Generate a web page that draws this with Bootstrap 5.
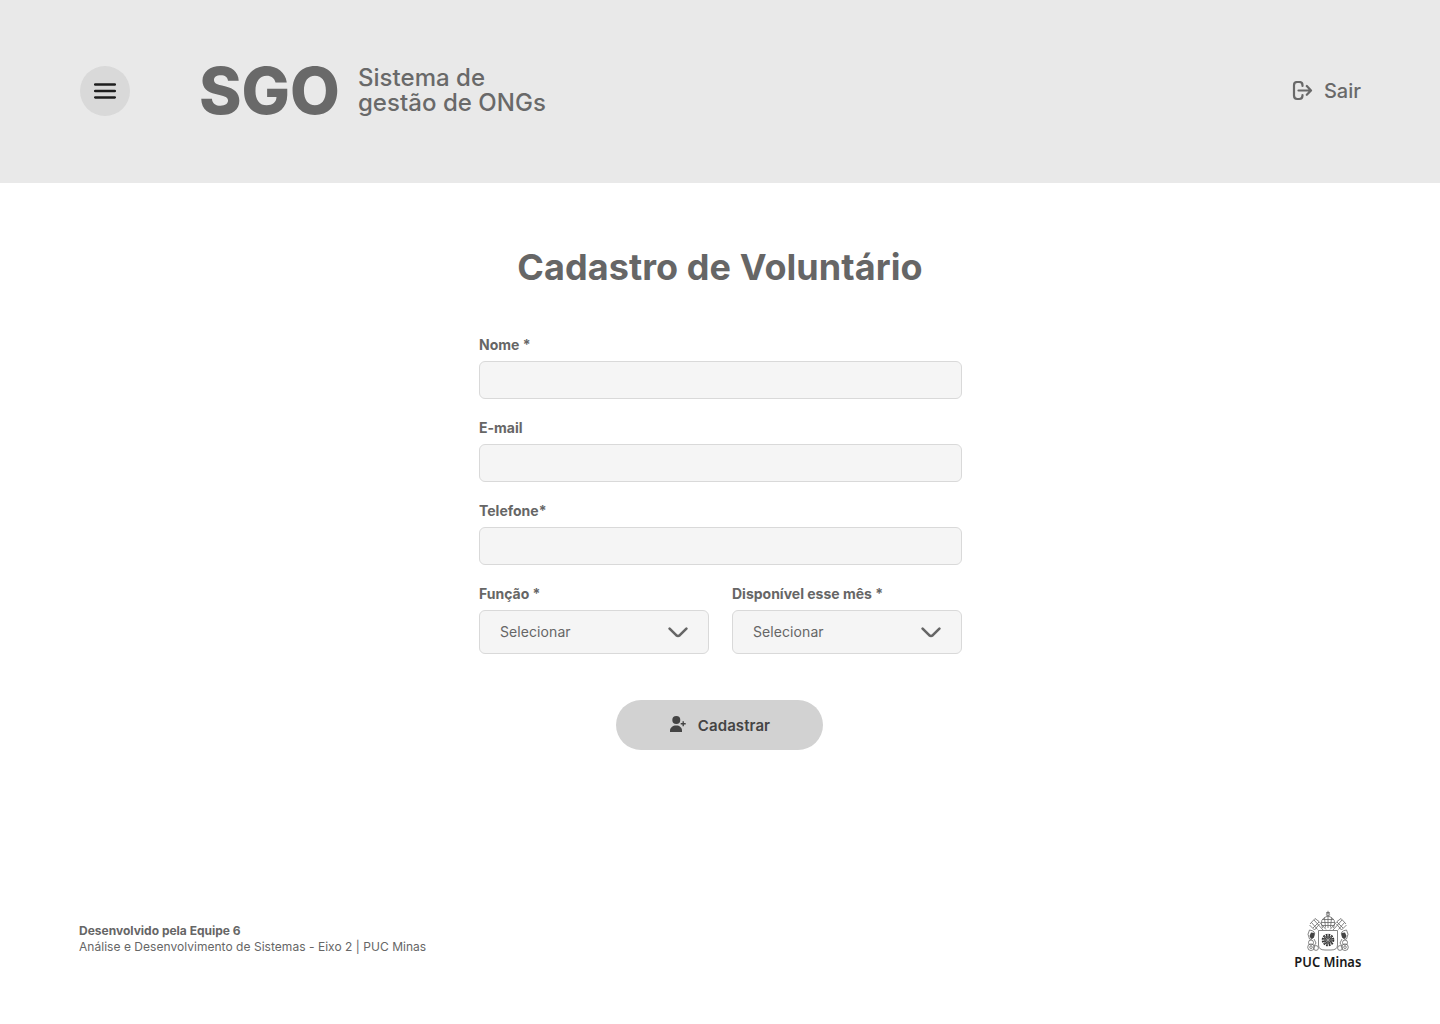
<!DOCTYPE html>
<html lang="pt-BR">
<head>
<meta charset="utf-8">
<meta name="viewport" content="width=device-width, initial-scale=1">
<title>SGO - Cadastro de Voluntário</title>
<link href="https://cdn.jsdelivr.net/npm/bootstrap@5.3.0/dist/css/bootstrap.min.css" rel="stylesheet">
<style>
body{font-family:Inter,"Liberation Sans",sans-serif;color:#666;min-height:1024px;background:#fff}
.topbar{height:183px;background:#e9e9e9;padding:0 79px 1px 80px}
.menu-btn{width:50px;height:50px;background:#d9d9d9;margin-right:69px}
.brand-name{font-size:64.5px;font-weight:800;line-height:50px;color:#696969;margin-bottom:1px}
.brand-sub{font-size:24px;font-weight:500;line-height:25px;margin-left:18px;color:#696969;margin-bottom:2px;letter-spacing:.03px}
.logout{font-size:20px;font-weight:500;color:#696969;gap:11px}
.page-title{font-size:36px;font-weight:700;line-height:44px;margin:62px 0 47px;color:#666;letter-spacing:.07px}
.form-area{width:483px;margin-left:1px}
.field-label{display:block;font-size:14px;font-weight:700;line-height:18px;margin-bottom:7px}
.field-gap{margin-bottom:20px}
.form-control.field-box{height:38px;background:#f5f5f5;border:1px solid #d9d9d9;border-radius:6px}
.select-box{height:44px;background:#f5f5f5;border:1px solid #d9d9d9;border-radius:6px;font-size:14px;color:#666;padding:0 20px;letter-spacing:.08px}
.select-text{margin-bottom:2px}
.select-col{width:230px}
.submit-btn{width:207px;height:50px;background:#d2d2d2;color:#444;font-size:15px;font-weight:600;margin-top:46px;margin-left:137px;gap:11px;letter-spacing:.08px}
.submit-btn.btn{padding:2px 0 0 1px !important}
.footer-bar{padding:0 78px 54px 79px}
.credits{font-size:12px;line-height:16px;margin-bottom:2px}
.credits-line{letter-spacing:.035px}
.crest{overflow:visible}
</style>
</head>
<body class="d-flex flex-column">
<header class="topbar d-flex align-items-center">
  <button class="menu-btn btn rounded-circle border-0 p-0 d-flex align-items-center justify-content-center flex-shrink-0" aria-label="Menu">
    <svg width="22" height="16" viewBox="0 0 22 16" stroke="#1e1e1e" stroke-width="2.5" stroke-linecap="round"><path d="M1.2 1.5h19.6M1.2 8h19.6M1.2 14.4h19.6"/></svg>
  </button>
  <div class="d-flex align-items-center">
    <span class="brand-name">SGO</span>
    <span class="brand-sub">Sistema de<br>gestão de ONGs</span>
  </div>
  <a href="#" class="logout ms-auto d-flex align-items-center text-decoration-none">
    <svg width="21" height="20" viewBox="0 0 21 20" fill="none" stroke="#696969" stroke-width="2.2" stroke-linecap="round" stroke-linejoin="round"><path d="M10.500 5V4.200Q10.500 1 7.300 1H5.200Q2 1 2 4.200v10.400Q2 18 5.200 18h2.100q3.200 0 3.200-3.400v-.6M6.500 9.500h12M14.800 5 19 9.500l-4.200 4.300"/></svg>
    <span>Sair</span>
  </a>
</header>
<main class="d-flex flex-column align-items-center">
  <h1 class="page-title">Cadastro de Voluntário</h1>
  <form class="form-area">
    <div class="field-gap"><label class="field-label" for="nome">Nome *</label><input id="nome" class="form-control field-box"></div>
    <div class="field-gap"><label class="field-label" for="email">E-mail</label><input id="email" class="form-control field-box"></div>
    <div class="field-gap"><label class="field-label" for="tel">Telefone*</label><input id="tel" class="form-control field-box"></div>
    <div class="d-flex justify-content-between">
      <div class="select-col"><span class="field-label">Função *</span>
        <div class="select-box d-flex align-items-center justify-content-between" role="button"><span class="select-text">Selecionar</span><svg width="20" height="11" viewBox="0 0 20 11" fill="none" stroke="#666" stroke-width="2.6" stroke-linecap="round" stroke-linejoin="round"><path d="M1.6 1.6 8.2 8.2q1.8 1.5 3.6 0L18.4 1.6"/></svg></div></div>
      <div class="select-col"><span class="field-label">Disponível esse mês *</span>
        <div class="select-box d-flex align-items-center justify-content-between" role="button"><span class="select-text">Selecionar</span><svg width="20" height="11" viewBox="0 0 20 11" fill="none" stroke="#666" stroke-width="2.6" stroke-linecap="round" stroke-linejoin="round"><path d="M1.6 1.6 8.2 8.2q1.8 1.5 3.6 0L18.4 1.6"/></svg></div></div>
    </div>
    <button type="button" class="submit-btn btn rounded-pill border-0 d-flex align-items-center justify-content-center">
      <svg class="mb-1" width="17" height="16" viewBox="0 0 17 16" fill="#444"><circle cx="6.300" cy="4" r="4"/><path d="M0 16v-1.200C0 11.500 2.800 9.500 6.200 9.500s5.800 2 5.800 5.300V16z"/><path d="M13.200 5.200v5M10.700 7.700h5" stroke="#444" stroke-width="1.400"/></svg>
      <span>Cadastrar</span>
    </button>
  </form>
</main>
<footer class="footer-bar mt-auto d-flex justify-content-between align-items-center">
  <div class="credits"><strong>Desenvolvido pela Equipe 6</strong><br><span class="credits-line">Análise e Desenvolvimento de Sistemas - Eixo 2 | PUC Minas</span></div>
  <svg class="crest" width="68" height="60" viewBox="0 0 68 60" fill="none" stroke="#666" stroke-width=".8" role="img" aria-label="PUC Minas">
    <path d="M34 .8v5M32.200 2.500h3.600"/><circle cx="34" cy="4.400" r="1.600"/>
    <path d="M28.500 18Q24.500 8.500 34 6q9.500 2.500 5.500 12M27.500 12.500h13M28.500 9.500h11M34 6v12M28 15.500h12M30.500 8l1 9.500M37.500 8l-1 9.500"/>
    <path d="M16 14l5-5.500 4 3 7 8M15.500 15l5 5 5-6M20 10l9 10M17.500 12.500l6 7M25 12l-6 6M52 14l-5-5.500-4 3-7 8M52.500 15l-5 5-5-6M48 10l-9 10M50.500 12.500l-6 7M43 12l6 6"/>
    <path fill="#fff" d="M24.500 20.500h19V35q0 5-6.500 5h-6q-6.500 0-6.500-5z"/>
    <g stroke="#333"><circle cx="34" cy="30" r="4" fill="#444" stroke="none"/><circle cx="34" cy="30" r="5" stroke-width="2.600" stroke-dasharray="1.700 .9"/></g>
    <path stroke="#ccc" stroke-width=".5" d="M29 30h10M34 25v10M30.500 26.500l7 7M37.500 26.500l-7 7"/>
    <path d="M15.500 20q7 1 4.500 6t-4.500 3q-3-5 0-9M52.500 20q-7 1-4.500 6t4.500 3q3-5 0-9"/>
    <path fill="#444" stroke="none" d="M17 22.500l3.500.5-.5 4.500-3 1.500-1.500-3zM51 22.500l-3.500.5.500 4.500 3 1.500 1.500-3z"/>
    <circle cx="17" cy="32.500" r="2.500"/><circle cx="51" cy="32.500" r="2.500"/><circle cx="17" cy="37.200" r="3.300"/><circle cx="51" cy="37.200" r="3.300"/><circle cx="17" cy="37.200" r="1.300"/><circle cx="51" cy="37.200" r="1.300"/><circle cx="22" cy="38" r="2.400"/><circle cx="46" cy="38" r="2.400"/>
    <path d="M20 29l2 4-2 3M48 29l-2 4 2 3"/>
    <text x=".3" y="56.500" font-family="Noto Sans,sans-serif" font-size="14" font-weight="600" fill="#1a1a1a" stroke="none" textLength="67" lengthAdjust="spacingAndGlyphs">PUC Minas</text>
  </svg>
</footer>
<script src="https://cdn.jsdelivr.net/npm/bootstrap@5.3.0/dist/js/bootstrap.bundle.min.js"></script>
</body>
</html>
